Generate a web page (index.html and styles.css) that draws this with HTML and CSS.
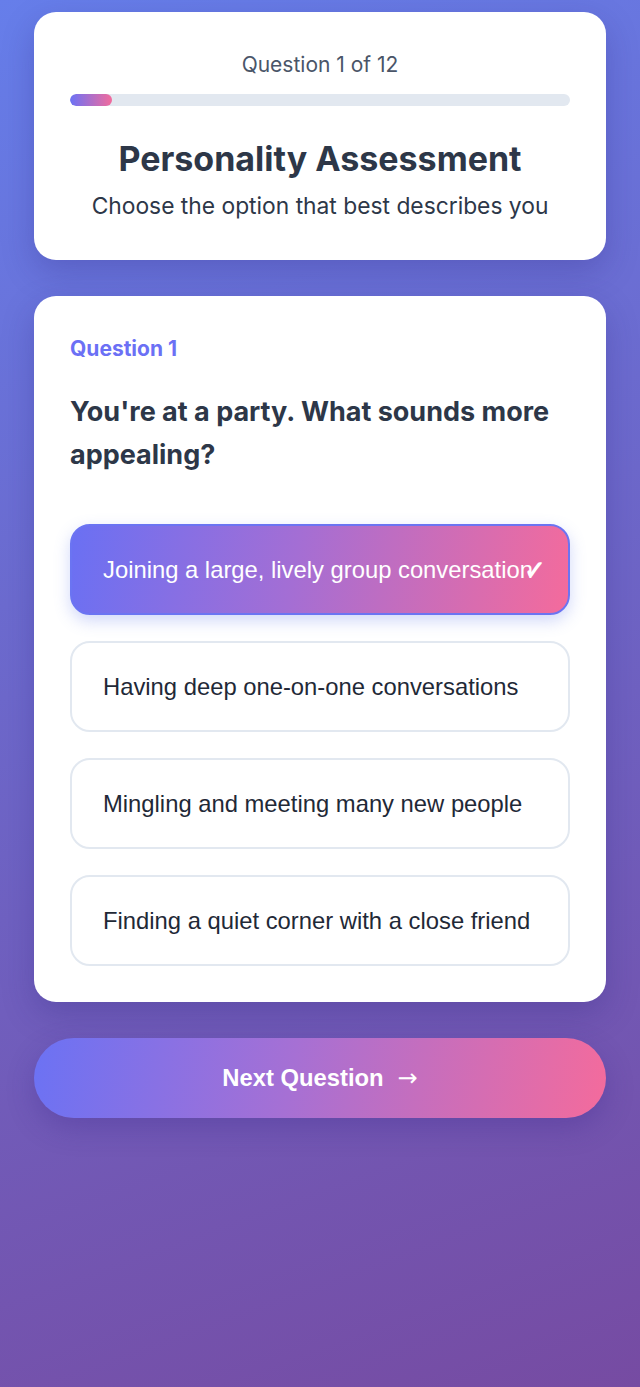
FILE: index.html
```html
<!DOCTYPE html>
<html lang="en">
<head>
<meta charset="utf-8">
<title>Personality Assessment</title>
<link rel="stylesheet" href="styles.css">
</head>
<body>
<main class="page">
  <section class="card header-card">
    <div class="counter">Question 1 of 12</div>
    <div class="progress"><div class="progress-fill" style="width: 8.33%"></div></div>
    <h1 class="title">Personality Assessment</h1>
    <p class="subtitle">Choose the option that best describes you</p>
  </section>

  <section class="card question-card">
    <div class="q-label">Question 1</div>
    <h2 class="q-text">You're at a party. What sounds more appealing?</h2>
    <div class="options">
      <button class="option selected"><span class="opt-text">Joining a large, lively group conversation</span><span class="check">✓</span></button>
      <button class="option"><span class="opt-text">Having deep one-on-one conversations</span></button>
      <button class="option"><span class="opt-text">Mingling and meeting many new people</span></button>
      <button class="option"><span class="opt-text">Finding a quiet corner with a close friend</span></button>
    </div>
  </section>

  <button class="next-btn">Next Question<span class="arrow">→</span></button>
</main>
</body>
</html>
```

FILE: styles.css
```css
* { box-sizing: border-box; }
html, body { margin: 0; padding: 0; }
body {
  min-height: 1387px;
  background: linear-gradient(160deg, #667eea 0%, #764ba2 100%);
  font-family: Inter, "Noto Sans", sans-serif;
  color: #2d3748;
}
.page {
  padding: 12px 34px 40px;
  display: flex;
  flex-direction: column;
  gap: 36px;
}
.card {
  background: #ffffff;
  border-radius: 22px;
  box-shadow: 0 12px 32px rgba(40, 30, 120, 0.25);
}
.header-card {
  padding: 40px 36px 40px;
  text-align: center;
}
.counter {
  font-size: 21px;
  line-height: 26px;
  color: #4a5568;
}
.progress {
  margin-top: 16px;
  height: 12px;
  border-radius: 6px;
  background: #e2e8f0;
  overflow: hidden;
}
.progress-fill {
  height: 100%;
  border-radius: 6px;
  background: linear-gradient(90deg, #6c72f5, #f26b9c);
}
.title {
  margin: 34px 0 0;
  font-size: 34px;
  line-height: 38px;
  font-weight: 700;
  color: #2d3748;
}
.subtitle {
  margin: 14px 0 0;
  font-size: 22.8px;
  line-height: 28px;
  color: #2d3748;
}
.question-card {
  padding: 40px 36px 36px;
}
.q-label {
  font-size: 21px;
  line-height: 26px;
  font-weight: 700;
  color: #6b70f5;
}
.q-text {
  margin: 28px 0 0;
  font-size: 27px;
  line-height: 43px;
  font-weight: 700;
  color: #2d3748;
}
.options {
  margin-top: 48px;
  display: flex;
  flex-direction: column;
  gap: 26px;
}
.option {
  position: relative;
  display: block;
  width: 100%;
  height: 91px;
  padding: 0 30px 0 31px;
  text-align: left;
  font-family: "Liberation Sans", Arial, sans-serif;
  font-size: 23.8px;
  color: #1f2937;
  background: #ffffff;
  border: 2px solid #e2e8f0;
  border-radius: 20px;
  white-space: nowrap;
  overflow: hidden;
}
.option.selected {
  color: #ffffff;
  background: linear-gradient(100deg, #6a70f3 0%, #a46ed4 45%, #f46b9c 100%);
  border-color: #6b74f2;
  box-shadow: 0 6px 16px rgba(102, 126, 234, 0.3);
}
.check {
  position: absolute;
  right: 22px;
  top: 50%;
  transform: translateY(-50%);
  font-size: 26px;
  font-weight: 700;
}
.next-btn {
  display: block;
  width: 100%;
  height: 80px;
  border: none;
  border-radius: 40px;
  background: linear-gradient(100deg, #6b72f4 0%, #a670d4 45%, #f46b9c 100%);
  color: #ffffff;
  font-family: "Liberation Sans", Arial, sans-serif;
  font-size: 23.8px;
  font-weight: 700;
  box-shadow: 0 10px 28px rgba(60, 40, 140, 0.3);
}
.arrow {
  margin-left: 14px;
  font-family: "DejaVu Sans", sans-serif;
  font-size: 24px;
  font-weight: 400;
}
```
